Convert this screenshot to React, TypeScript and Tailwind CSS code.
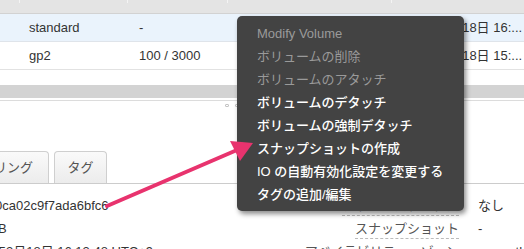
import React from "react";

const font = "font-['Liberation_Sans','Noto_Sans_CJK_JP',sans-serif]";

function MenuItem({ label, disabled }: { label: string; disabled?: boolean }) {
  return (
    <div
      className={
        "h-[23px] leading-[23px] pl-[20px] whitespace-nowrap " +
        (disabled ? "text-[#9a9a9a]" : "text-white font-medium")
      }
    >
      {label}
    </div>
  );
}

export default function App() {
  return (
    <div
      className={
        "relative w-[524px] h-[249px] overflow-hidden bg-white text-[13px] text-[#333] " + font
      }
    >
      {/* table header (bottom part) */}
      <div className="flex h-[14px] bg-[#e4e4e4] border-b border-[#d2d2d2]">
        <div className="w-[20px] border-r border-[#f4f4f4] h-[3px]" />
        <div className="w-[108px] border-r border-[#f4f4f4] h-[3px]" />
        <div className="w-[100px] border-r border-[#f4f4f4] h-[3px]" />
        <div className="w-[164px] border-r border-[#f4f4f4] h-[3px]" />
      </div>

      {/* row 1 */}
      <div className="flex items-center h-[28px] bg-[#eaf3fc] border-b border-[#dfe4ea] whitespace-nowrap">
        <div className="w-[29px] shrink-0" />
        <div className="w-[110px] shrink-0">standard</div>
        <div className="w-[261px] shrink-0">-</div>
        <div className="shrink-0">2017年3月18日 16:...</div>
      </div>

      {/* row 2 */}
      <div className="flex items-center h-[28px] border-b border-[#e2e2e2] whitespace-nowrap">
        <div className="w-[29px] shrink-0" />
        <div className="w-[110px] shrink-0">gp2</div>
        <div className="w-[261px] shrink-0">100 / 3000</div>
        <div className="shrink-0">2017年3月18日 15:...</div>
      </div>

      {/* splitter */}
      <div className="mt-[15px] h-[13px] bg-[#d3d3d3]" />
      <div className="mt-[2px] h-px bg-[#dcdcdc]" />
      <div className="flex gap-[6px] pl-[225px] pt-[3px]">
        <div className="w-[4px] h-[3px] rounded-[1px] border border-[#c4c4c4]" />
        <div className="w-[4px] h-[3px] rounded-[1px] border border-[#c4c4c4]" />
      </div>

      {/* tabs */}
      <div className="mt-[44px] flex items-end gap-[5px] h-[33px] border-b border-[#cccccc]">
        <div className="w-[49px] h-[32px] flex items-center justify-end pr-[15px] rounded-tr-[4px] border border-l-0 border-b-0 border-[#cfcfcf] bg-gradient-to-b from-[#fafafa] to-[#ececec] text-[#555] whitespace-nowrap">
          リング
        </div>
        <div className="w-[53px] h-[32px] flex items-center justify-center rounded-t-[4px] border border-b-0 border-[#cfcfcf] bg-gradient-to-b from-[#fafafa] to-[#ececec] text-[#555]">
          タグ
        </div>
      </div>

      {/* details */}
      <div className="mt-[10px] grid grid-cols-[200px_259px_65px] auto-rows-[23px] items-center whitespace-nowrap">
        <div className="-ml-[5px]">0ca02c9f7ada6bfc6</div>
        <div className="text-right">
          <span className="border-b border-dashed border-[#bbbbbb] pb-[2px] text-[#555]">アラームステータス</span>
        </div>
        <div className="pl-[19px]">なし</div>

        <div className="-ml-[2px]">B</div>
        <div className="text-right">
          <span className="border-b border-dashed border-[#bbbbbb] pb-[2px] text-[#555]">スナップショット</span>
        </div>
        <div className="pl-[19px]">-</div>

        <div className="-ml-[7px]">年3月18日 16:13:48 UTC+9</div>
        <div className="text-right">
          <span className="border-b border-dashed border-[#bbbbbb] pb-[2px] text-[#555]">アベイラビリティーゾーン</span>
        </div>
        <div className="pl-[19px]">ap-northeast-1c</div>
      </div>

      {/* context menu */}
      <div className="absolute left-[237px] top-[16px] w-[227px] h-[195px] rounded-[5px] bg-[#434343] pt-[6px] shadow-[2px_3px_5px_rgba(0,0,0,0.45)]">
        <MenuItem label="Modify Volume" disabled />
        <MenuItem label="ボリュームの削除" disabled />
        <MenuItem label="ボリュームのアタッチ" disabled />
        <MenuItem label="ボリュームのデタッチ" />
        <MenuItem label="ボリュームの強制デタッチ" />
        <MenuItem label="スナップショットの作成" />
        <MenuItem label="IO の自動有効化設定を変更する" />
        <MenuItem label="タグの追加/編集" />
      </div>

      {/* arrow */}
      <svg
        className="absolute left-0 top-0 pointer-events-none"
        width="524"
        height="249"
        viewBox="0 0 524 249"
      >
        <line x1="107" y1="206" x2="237" y2="150" stroke="#e8336e" strokeWidth="4" strokeLinecap="round" />
        <polygon points="253,143 230,141 240,161" fill="#e8336e" />
      </svg>
    </div>
  );
}
